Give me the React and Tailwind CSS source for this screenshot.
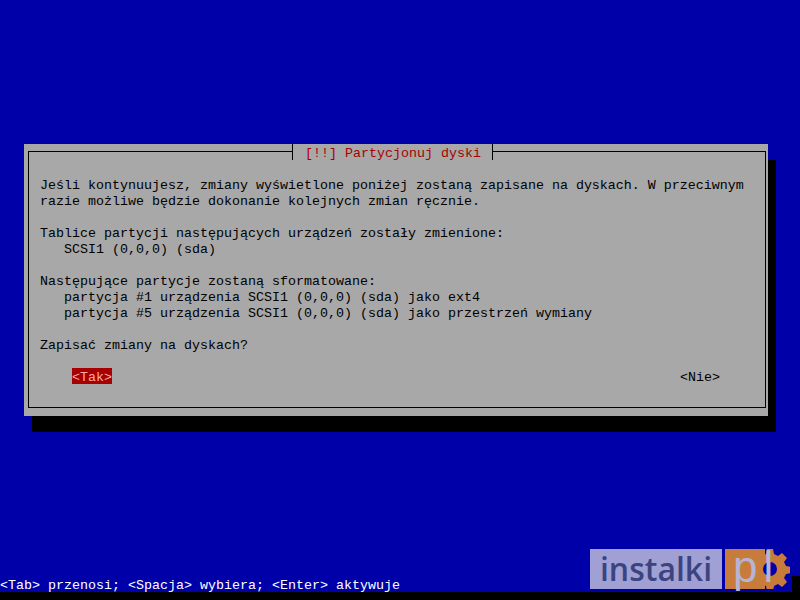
const mono = "font-['Liberation_Mono',monospace] text-[13.33px] leading-[20px] whitespace-pre";

const lines = [
	"Jeśli kontynuujesz, zmiany wyświetlone poniżej zostaną zapisane na dyskach. W przeciwnym",
	"razie możliwe będzie dokonanie kolejnych zmian ręcznie.",
	" ",
	"Tablice partycji następujących urządzeń zostały zmienione:",
	"   SCSI1 (0,0,0) (sda)",
	" ",
	"Następujące partycje zostaną sformatowane:",
	"   partycja #1 urządzenia SCSI1 (0,0,0) (sda) jako ext4",
	"   partycja #5 urządzenia SCSI1 (0,0,0) (sda) jako przestrzeń wymiany",
	" ",
	"Zapisać zmiany na dyskach?",
];

function Logo() {
	return (
		<div className="absolute left-[590px] top-[549px] flex h-[40px] w-[200px] items-stretch gap-[3px]">
			<div className="flex w-[132px] items-center justify-center bg-[#a0a0d4] font-['Open_Sans',sans-serif] text-[32px] font-semibold leading-none text-[#3c4480]">
				instalki
			</div>
			<div className="relative w-[40px] bg-[#c87c3c] pl-[8px] font-['Liberation_Sans',sans-serif] text-[44px] leading-[36px] tracking-[6px] text-[#b4b4d4]">
				<span className="relative z-10">pl</span>
				<svg viewBox="0 0 40 40" className="absolute left-[25px] top-0 h-10 w-10">
					<path
						fill="#c87c3c"
						d="M17 0h6l1 5 4 2 4-3 5 5-3 4 2 4 5 1v6l-5 1-2 4 3 4-5 5-4-3-4 2-1 5h-6l-1-5-4-2-4 3-5-5 3-4-2-4-5-1v-6l5-1 2-4-3-4 5-5 4 3 4-2z"
					/>
					<circle cx="20" cy="20" r="7" fill="#0000a8" />
				</svg>
			</div>
		</div>
	);
}

export default function App() {
	return (
		<div className={`relative flex h-[600px] w-[800px] flex-col overflow-hidden bg-[#0000a8] ${mono}`}>
			<div className="ml-6 mt-36 h-[272px] w-[744px] bg-[#a8a8a8] pl-1 pt-[7px] text-black shadow-[8px_16px_0_#000]">
				<div className="relative h-[257px] w-[738px] border border-black">
					<div className="absolute left-[263px] top-[-8px] h-4 w-[201px] border-x border-black bg-[#a8a8a8] px-[12px] text-[#a80000]">
						[!!] Partycjonuj dyski
					</div>
					<div className="ml-[11px] mt-6">
						{lines.map((line, i) => (
							<div key={i} className="h-4">
								{line}
							</div>
						))}
					</div>
					<div className="mt-4 flex justify-between pl-[43px] pr-[45px]">
						<span className="h-4 bg-[#a80000] text-[#fca8a8]">&lt;Tak&gt;</span>
						<span className="h-4">&lt;Nie&gt;</span>
					</div>
				</div>
			</div>
			<div className="mt-auto h-4 w-[792px] text-white">
				&lt;Tab&gt; przenosi; &lt;Spacja&gt; wybiera; &lt;Enter&gt; aktywuje
			</div>
			<div className="h-2 bg-black" />
			<div className="absolute bottom-2 right-0 h-4 w-2 bg-black" />
			<Logo />
		</div>
	);
}
